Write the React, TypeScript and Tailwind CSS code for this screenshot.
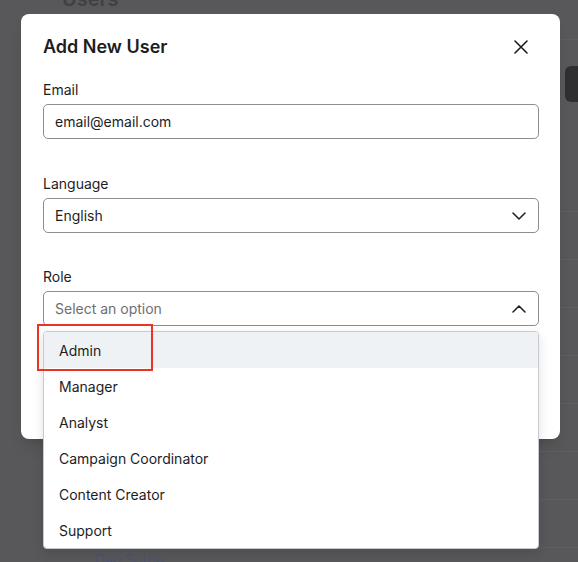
import React from "react";

const roles = [
  "Admin",
  "Manager",
  "Analyst",
  "Campaign Coordinator",
  "Content Creator",
  "Support",
];

function Chevron({ up = false }: { up?: boolean }) {
  return (
    <svg width="14" height="8" viewBox="0 0 14 8" fill="none" className="mr-[12px]">
      <polyline
        points={up ? "1,7 7,1 13,7" : "1,1 7,7 13,1"}
        stroke="#1d1d1f"
        strokeWidth="1.5"
        strokeLinecap="round"
        strokeLinejoin="round"
      />
    </svg>
  );
}

function CloseIcon() {
  return (
    <svg width="14" height="14" viewBox="0 0 14 14" fill="none" className="mr-[11px]">
      <path d="M1 1L13 13M13 1L1 13" stroke="#1d1d1f" strokeWidth="1.6" strokeLinecap="round" />
    </svg>
  );
}

function Label({ children }: { children: React.ReactNode }) {
  return <div className="text-[14px] leading-[20px] text-[#1d1d1f]">{children}</div>;
}

export default function App() {
  return (
    <div className="relative w-[578px] h-[562px] overflow-hidden bg-[#58585a] font-['Inter',sans-serif]">
      {/* page behind the overlay */}
      <div className="flex flex-col">
        <div className="h-[40px] pl-[62px] flex flex-col">
          <h1 className="-mt-[11px] text-[20px] leading-none font-semibold text-[#404042]">Users</h1>
          <div className="mt-auto ml-[60px] border-b border-[#5f5f61]" />
        </div>
        <div className="ml-[60px] h-[172px] border-b border-[#5f5f61] flex items-start justify-end pt-[26px]">
          <div className="w-[40px] h-[36px] rounded-[6px] bg-[#2f2f31] -mr-[27px]" />
        </div>
        {[0, 1, 2, 3, 4, 5, 6].map((i) => (
          <div key={i} className="ml-[60px] h-[48px] border-b border-[#5f5f61]" />
        ))}
        <div className="pl-[95px] pt-[2px] text-[14px] leading-[20px] text-[#4a5370]">Dan Sotrin</div>
      </div>

      {/* dialog */}
      <div className="absolute left-[21px] top-[14px] w-[539px] h-[425px] rounded-[8px] bg-white shadow-lg pl-[22px] pr-[21px] pt-[19px]">
        <div className="flex items-center justify-between h-[28px]">
          <h2 className="text-[18px] leading-[28px] font-semibold text-[#1d1d1f]">Add New User</h2>
          <CloseIcon />
        </div>

        <div className="mt-[19px]">
          <Label>Email</Label>
          <div className="mt-[4px] h-[35px] flex items-center rounded-[5px] border border-[#8d8d90] px-[11px] text-[14px] text-[#1d1d1f]">
            email@email.com
          </div>
        </div>

        <div className="mt-[35px]">
          <Label>Language</Label>
          <div className="mt-[4px] h-[35px] flex items-center justify-between rounded-[5px] border border-[#8d8d90] pl-[11px] text-[14px] text-[#1d1d1f]">
            <span>English</span>
            <Chevron />
          </div>
        </div>

        <div className="mt-[34px] relative">
          <Label>Role</Label>
          <div className="mt-[4px] h-[35px] flex items-center justify-between rounded-[5px] border border-[#8d8d90] pl-[11px] text-[14px] text-[#6e6e73]">
            <span>Select an option</span>
            <Chevron up />
          </div>

          {/* open options list */}
          <div className="absolute left-0 right-0 top-[64px] z-10 rounded-[4px] border border-[#c4cacf] bg-white shadow-[0_4px_12px_rgba(0,0,0,0.12)] overflow-hidden">
            {roles.map((r, i) => (
              <div
                key={r}
                className={
                  i === 0
                    ? "h-[36px] flex items-center pl-[15px] text-[14px] text-[#1d1d1f] bg-[#eff2f4]"
                    : "h-[36px] flex items-center pl-[15px] text-[14px] text-[#1d1d1f]"
                }
              >
                {r}
              </div>
            ))}
          </div>
        </div>
      </div>

      {/* highlight around the first option */}
      <div className="absolute left-[37px] top-[324px] w-[116px] h-[47px] border-2 border-[#ea3323] z-20" />
    </div>
  );
}
